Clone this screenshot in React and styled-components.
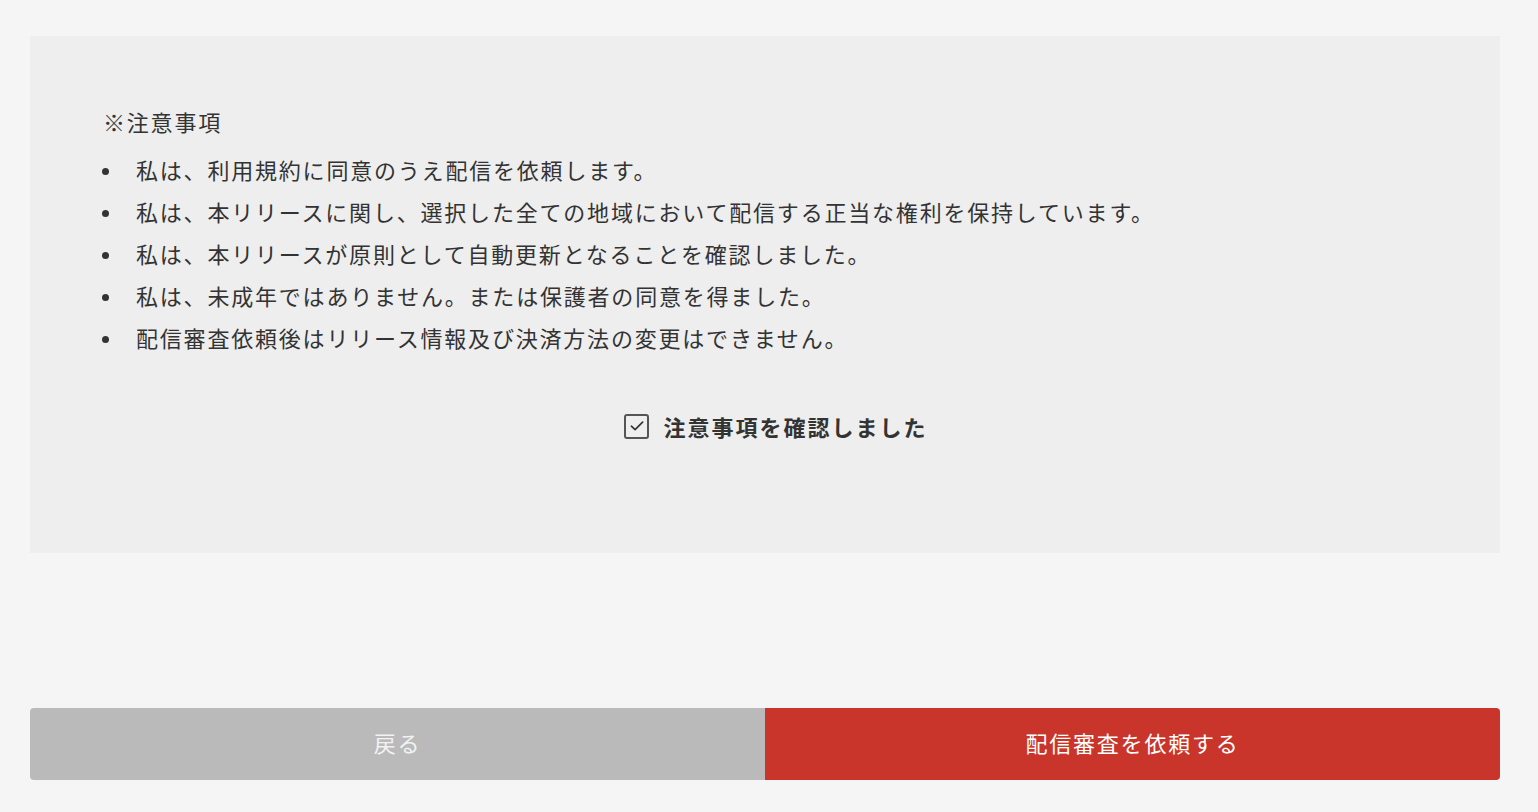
import React from "react";
import styled, { createGlobalStyle } from "styled-components";

const GlobalStyle = createGlobalStyle`
  html, body {
    margin: 0;
    padding: 0;
    background-color: #f5f5f5;
    font-family: "Noto Sans CJK JP", "Noto Sans", sans-serif;
    color: #333333;
  }
`;

const notes = [
  "私は、利用規約に同意のうえ配信を依頼します。",
  "私は、本リリースに関し、選択した全ての地域において配信する正当な権利を保持しています。",
  "私は、本リリースが原則として自動更新となることを確認しました。",
  "私は、未成年ではありません。または保護者の同意を得ました。",
  "配信審査依頼後はリリース情報及び決済方法の変更はできません。",
];

export default function App() {
  return (
    <>
      <GlobalStyle />
      <Page>
        <NoticePanel>
          <NoticeTitle>※注意事項</NoticeTitle>
          <NoticeList>
            {notes.map((text) => (
              <NoticeItem key={text}>{text}</NoticeItem>
            ))}
          </NoticeList>
          <ConfirmRow>
            <CheckBox>
              <svg width="18" height="18" viewBox="0 0 16 16" fill="none">
                <polyline
                  points="3,8.2 6.3,11.3 13,4.6"
                  stroke="#333"
                  strokeWidth="1.5"
                  strokeLinecap="round"
                  strokeLinejoin="round"
                />
              </svg>
            </CheckBox>
            <ConfirmLabel>注意事項を確認しました</ConfirmLabel>
          </ConfirmRow>
        </NoticePanel>
        <ButtonRow>
          <ActionButton $variant="back">戻る</ActionButton>
          <ActionButton $variant="submit">配信審査を依頼する</ActionButton>
        </ButtonRow>
      </Page>
    </>
  );
}

const Page = styled.div`
  width: 1538px;
  height: 812px;
  box-sizing: border-box;
  padding: 36px 38px 32px 30px;
  display: flex;
  flex-direction: column;
`;

const NoticePanel = styled.div`
  background-color: #eeeeee;
  padding: 64px 73px 106px;
  display: flex;
  flex-direction: column;
`;

const NoticeTitle = styled.div`
  font-size: 22px;
  line-height: 42px;
  letter-spacing: 1.8px;
`;

const NoticeList = styled.ul`
  list-style: none;
  margin: 6px 0 0;
  padding: 0;
`;

const NoticeItem = styled.li`
  display: flex;
  align-items: center;
  font-size: 22px;
  line-height: 42px;
  letter-spacing: 1.8px;

  &::before {
    content: "";
    flex: none;
    width: 7px;
    height: 7px;
    border-radius: 50%;
    background-color: #333333;
    margin: 4px 27px 0 -1px;
  }
`;

const ConfirmRow = styled.label`
  margin-top: 47px;
  height: 42px;
  display: flex;
  align-items: center;
  justify-content: center;
  gap: 14px;
  padding-left: 22px;
`;

const CheckBox = styled.span`
  width: 25px;
  height: 25px;
  box-sizing: border-box;
  border: 2px solid #555555;
  border-radius: 3px;
  display: flex;
  align-items: center;
  justify-content: center;
`;

const ConfirmLabel = styled.span`
  font-size: 22px;
  font-weight: 700;
  letter-spacing: 2px;
`;

const ButtonRow = styled.div`
  margin-top: auto;
  display: flex;
  height: 72px;
  border-radius: 4px;
  overflow: hidden;
`;

const ActionButton = styled.button`
  flex: 1;
  border: none;
  margin: 0;
  padding: 0 0 5px;
  font-family: "Noto Sans CJK JP", "Noto Sans", sans-serif;
  font-size: 22px;
  letter-spacing: 1.8px;
  color: ${(p) => (p.$variant === "submit" ? "#ffffff" : "#f2f2f2")};
  background-color: ${(p) => (p.$variant === "submit" ? "#c9352a" : "#bababa")};
  cursor: pointer;
`;
